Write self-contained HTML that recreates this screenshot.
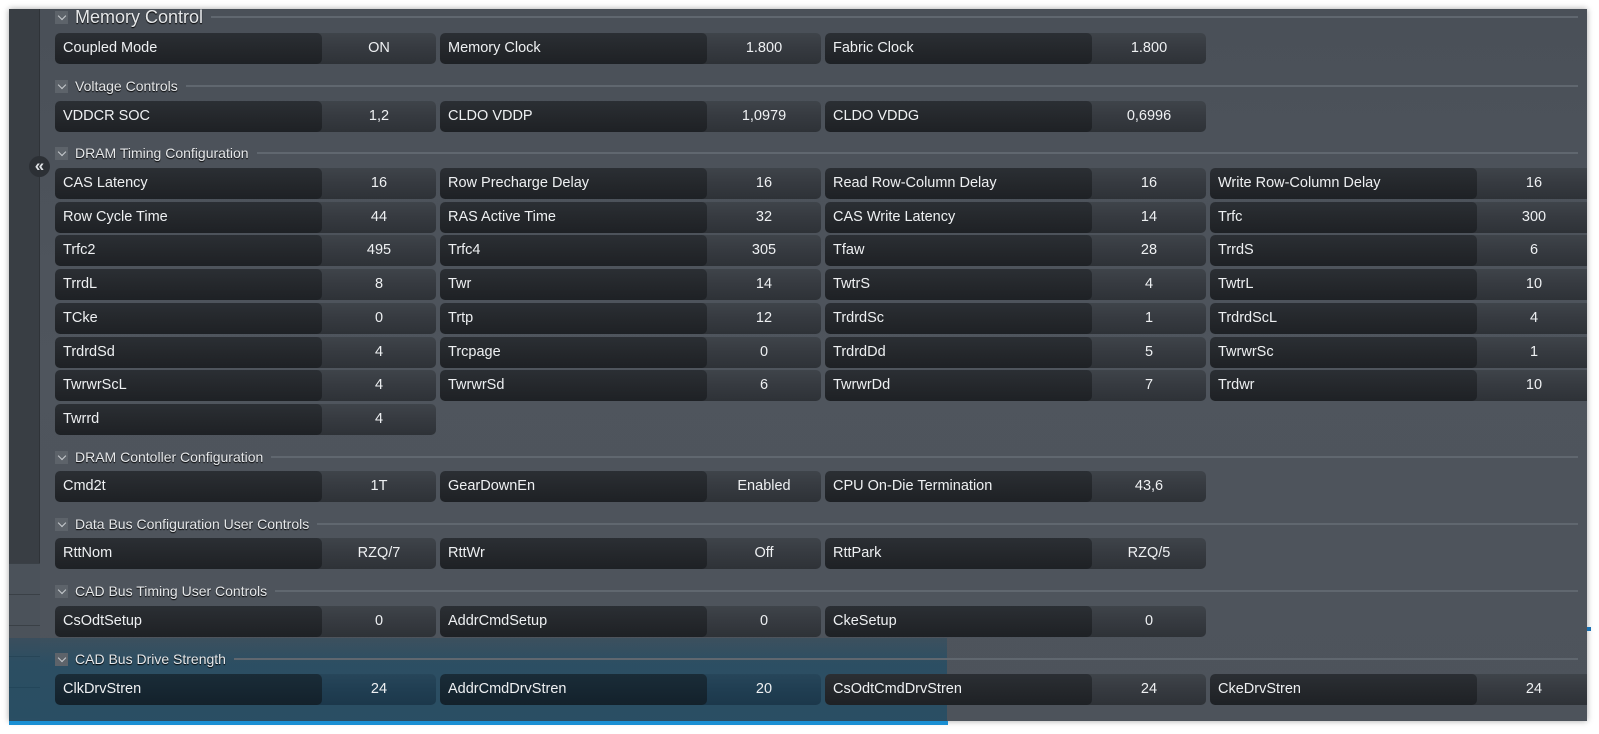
<!DOCTYPE html>
<html><head><meta charset="utf-8"><style>
*{margin:0;padding:0;box-sizing:border-box}
body{width:1599px;height:734px;background:#fff;position:relative;overflow:hidden;font-family:"Liberation Sans","DejaVu Sans",sans-serif;}
#win{position:absolute;left:9px;top:9px;width:1578px;height:712px;background:linear-gradient(180deg,#4a5058 0%,#4f555d 50%,#4d535b 100%);box-shadow:0 0 6px rgba(0,0,0,.35);overflow:hidden}
#side{position:absolute;left:0;top:0;width:31px;height:709px;background:#393e44;border-right:1px solid #2f3338}
.tab{position:absolute;left:0;width:31px;height:31px;background:#4b525a;border-top:1px solid #3a4046}
.hdr{position:absolute;height:16px;display:flex;align-items:center}
.hdr .chev{position:relative;flex:0 0 13px;width:13px;height:13px;background:#5d636a}
.hdr .chev:after{content:"";position:absolute;left:3.5px;top:2px;width:5px;height:5px;border-right:1.5px solid #c8ccd0;border-bottom:1.5px solid #c8ccd0;transform:rotate(45deg)}
.hdr span{margin-left:7px;color:#e6e8ea;font-size:14px;padding-right:8px;text-shadow:0 1px 1px #000;white-space:nowrap}
.hdr .line{flex:1;height:2px;background:#60676f}
.cell{position:absolute;width:381px;height:31px;border-radius:5px;background:linear-gradient(180deg,#3f444a,#363a40 50%,#2e3237);overflow:hidden;color:#eef0f2;font-size:14.5px}
.cell .l{position:absolute;left:0;top:0;width:267px;height:31px;border-radius:5px;background:linear-gradient(180deg,#2b2f34,#24272b 55%,#1e2125);padding-left:8px;line-height:31px}
.cell .v{position:absolute;left:267px;width:114px;top:0;line-height:31px;text-align:center}
</style></head><body>
<div id="win">
<div id="side">
 <div class="tab" style="top:554px"></div><div class="tab" style="top:585px"></div><div class="tab" style="top:616px"></div><div class="tab" style="top:647px"></div><div class="tab" style="top:678px"></div>
</div>
<div style="position:absolute;left:20px;top:147px;width:21px;height:21px;border-radius:50%;background:#2c3035;color:#dfe2e5;font-size:17px;line-height:19px;text-align:center;font-weight:bold">«</div>
</div>
<div style="position:absolute;left:9px;top:638px;width:938px;height:83px;background:linear-gradient(180deg,rgba(20,70,100,.3),rgba(18,75,105,.55) 30%,rgba(18,75,105,.6))"></div>
<div id="content" style="position:absolute;left:0;top:0;width:1587px;height:721px;overflow:hidden"></div>
<div style="position:absolute;left:9px;top:721px;width:939px;height:4px;background:#1a8fd3"></div>
<div style="position:absolute;left:1587px;top:627px;width:4px;height:4px;background:#1a70b0"></div>
<script>
const c=document.getElementById('content');
const X=[55,440,825,1210];
function hdr(y,t,big){c.insertAdjacentHTML('beforeend',`<div class="hdr" style="top:${y}px;left:55px;right:9px"><div class="chev"></div><span style="${big?'font-size:18px;':''}">${t}</span><div class="line"></div></div>`)}
function row(y,items,teal){items.forEach((it,i)=>{const tl=teal&&i<2;c.insertAdjacentHTML('beforeend',`<div class="cell" style="left:${X[i]}px;top:${y}px;${tl?'background:linear-gradient(180deg,#27465a,#203e52 50%,#1c384b)':''}"><div class="l" style="${tl?'background:linear-gradient(180deg,#1a2c38,#162631 55%,#13212b)':''}">${it[0]}</div><div class="v">${it[1]}</div></div>`)})}
hdr(9,'Memory Control',true);
row(33,[['Coupled Mode','ON'],['Memory Clock','1.800'],['Fabric Clock','1.800']]);
hdr(78,'Voltage Controls');
row(101,[['VDDCR SOC','1,2'],['CLDO VDDP','1,0979'],['CLDO VDDG','0,6996']]);
hdr(145,'DRAM Timing Configuration');
const d=[[['CAS Latency',16],['Row Precharge Delay',16],['Read Row-Column Delay',16],['Write Row-Column Delay',16]],
[['Row Cycle Time',44],['RAS Active Time',32],['CAS Write Latency',14],['Trfc',300]],
[['Trfc2',495],['Trfc4',305],['Tfaw',28],['TrrdS',6]],
[['TrrdL',8],['Twr',14],['TwtrS',4],['TwtrL',10]],
[['TCke',0],['Trtp',12],['TrdrdSc',1],['TrdrdScL',4]],
[['TrdrdSd',4],['Trcpage',0],['TrdrdDd',5],['TwrwrSc',1]],
[['TwrwrScL',4],['TwrwrSd',6],['TwrwrDd',7],['Trdwr',10]],
[['Twrrd',4]]];
d.forEach((r,i)=>row(168+i*33.7,r));
hdr(449,'DRAM Contoller Configuration');
row(471,[['Cmd2t','1T'],['GearDownEn','Enabled'],['CPU On-Die Termination','43,6']]);
hdr(516,'Data Bus Configuration User Controls');
row(538,[['RttNom','RZQ/7'],['RttWr','Off'],['RttPark','RZQ/5']]);
hdr(583,'CAD Bus Timing User Controls');
row(606,[['CsOdtSetup',0],['AddrCmdSetup',0],['CkeSetup',0]]);
hdr(651,'CAD Bus Drive Strength');
row(674,[['ClkDrvStren',24],['AddrCmdDrvStren',20],['CsOdtCmdDrvStren',24],['CkeDrvStren',24]],true);
</script>
</body></html>
